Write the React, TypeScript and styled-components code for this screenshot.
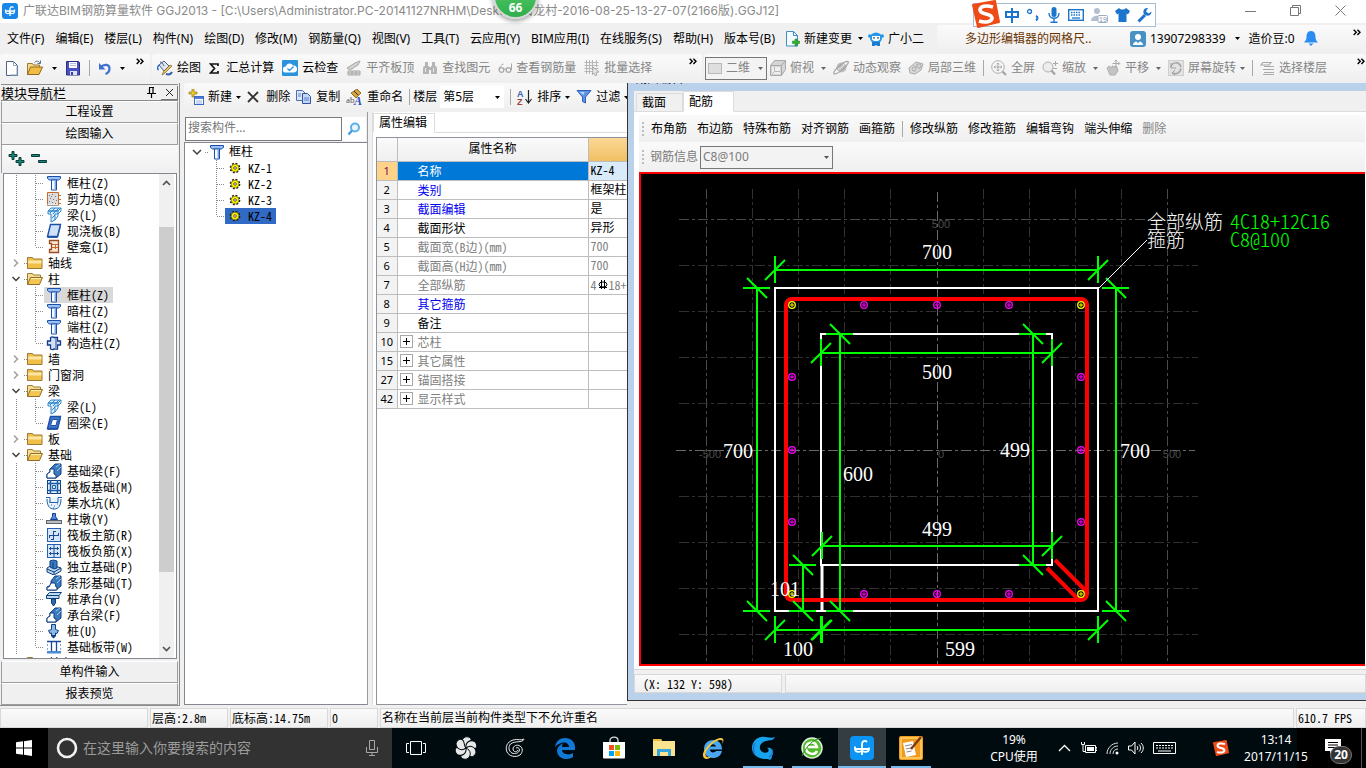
import React from "react";
import styled, { createGlobalStyle, css } from "styled-components";

const UI = `"Noto Sans", "Noto Sans CJK SC", sans-serif`;
const SONG = `"Noto Sans CJK SC", sans-serif`;
const shade = "linear-gradient(#fafafa, #efefef)";

const Global = createGlobalStyle`
  * { box-sizing: border-box; }
  html, body { margin: 0; padding: 0; height: 100%; }
  body { font: 12px/16px ${UI}; color: #000; background: #f0f0f0; overflow: hidden; }
  button, input, select { font: inherit; color: inherit; margin: 0; padding: 0; border: 0; background: none; border-radius: 0; }
  button { white-space: nowrap; text-align: left; }
  ul { list-style: none; margin: 0; padding: 0; }
  svg { display: block; flex: none; }
`;

const Page = styled.div`
  height: 100vh;
  display: flex;
  flex-direction: column;
  position: relative;
  overflow: hidden;
`;

/* ---------- CJK text with half-width latin forms ---------- */
const Song = styled.span`
  font-family: ${SONG};
  font-feature-settings: "hwid";
  white-space: pre;
`;

/* ---------- icons ---------- */
type IcoProps = { w?: number; h?: number; box?: string; children: React.ReactNode };
const Ico = ({ w = 16, h = 16, box, children }: IcoProps) => (
  <svg width={w} height={h} viewBox={box || `0 0 ${w} ${h}`} fill="none" aria-hidden="true">
    {children}
  </svg>
);

const Caret = ({ color = "#000" }: { color?: string }) => (
  <Ico w={5} h={3}>
    <path d="M0 0h5L2.5 3z" fill={color} />
  </Ico>
);
const More = () => (
  <Ico w={8} h={7}>
    <path d="M.7 .7l2.6 2.6L.7 6M4.4 .7L7 3.300 4.400 6" stroke="#000" strokeWidth="1.400" />
  </Ico>
);

const Logo = () => (
  <Ico>
    <rect width="16" height="16" rx="3" fill="#1788e8" />
    <path d="M8 13V5.500a2 2 0 0 1 3.500-1M3.500 8h9M3.500 6.500v2A2.300 2.300 0 0 0 8 9a2.300 2.300 0 0 0 4.500-.5v-2" stroke="#fff" strokeWidth="1.300" />
  </Ico>
);
const NewDoc = () => (
  <Ico w={12} h={15}>
    <path d="M.5.5h7l4 4v10H.5z" fill="#fff" stroke="#4d6185" />
    <path d="M7.500.5v4h4M11 6v8H4" stroke="#8fa5c6" />
  </Ico>
);
const OpenDir = () => (
  <Ico>
    <path d="M.5 14.500v-11h5l1 1.500h6v2.500" fill="#f5d98b" stroke="#9a7a35" />
    <path d="M.5 14.500l3-7.500h12l-3.500 7.500z" fill="#f3bd45" stroke="#8f6b1e" />
    <path d="M7.500 2.500c2-2 4.500-1.500 5.500.500M13.500.5V3.500h-3" stroke="#59708f" />
  </Ico>
);
const Save = () => (
  <Ico w={14} h={15}>
    <path d="M.5.5h12l1 1v12.500H.5z" fill="#4a50c0" stroke="#2a2e85" />
    <path d="M3 1h8v6H3z" fill="#fff" />
    <path d="M4 2.500h6M4 4.500h6" stroke="#b9bede" />
    <path d="M4 10h7v4H4z" fill="#dde0f2" />
    <path d="M5 11h2v3H5z" fill="#3a41a5" />
  </Ico>
);
const Undo = () => (
  <Ico w={12} h={13}>
    <path d="M1.500 5.500C5 1.500 10.500 2 10.500 6.500c0 2.500-1.500 4.500-4 5.500" stroke="#3f6fd0" strokeWidth="2.200" />
    <path d="M0 1v6.500h6.500z" fill="#3f6fd0" />
  </Ico>
);
const Paint = () => (
  <Ico>
    <path d="M2 5l5-4 5 5-5 5z" fill="#dce6f2" stroke="#476080" />
    <path d="M3 2c2 0 3 2 4 4" stroke="#476080" />
    <path d="M2 5c-2 2-1.500 4-.5 5" stroke="#2d69c9" strokeWidth="1.500" />
    <path d="M15 6l-7 7-3 2 1.500-3.500L13 5z" fill="#e7bf5e" stroke="#7d6426" strokeWidth=".7" />
    <path d="M9 14c3 1 5 0 6-2" stroke="#315ca8" strokeWidth="2" />
  </Ico>
);
const Sigma = () => (
  <Ico w={10} h={11}>
    <path d="M9 3V1H1.500l4 4.500-4 4.500H9V8" stroke="#111" strokeWidth="1.700" />
  </Ico>
);
const CloudCheck = () => (
  <Ico>
    <rect width="16" height="16" rx="1" fill="#2a93dd" />
    <path d="M4 12.500a3 3 0 0 1-.3-6A4 4 0 0 1 11 5.500a3.500 3.500 0 0 1 1 7z" fill="#fff" />
    <path d="M5.500 8.500l2 2 4-4" stroke="#2a93dd" strokeWidth="1.300" />
  </Ico>
);
const grey = "#a9a9a9";
const Align = () => (
  <Ico>
    <path d="M1 8l8-5 5-2-2 4-8 5z" fill="#d2d2d2" stroke={grey} />
    <path d="M2 11h12v4H2zM2 13h12M6 11v4M10 11v4" stroke={grey} fill="#dcdcdc" />
  </Ico>
);
const Binoc = () => (
  <Ico>
    <path d="M3 2h3v4H3zM10 2h3v4h-3zM2 6h5v8H1V8zM9 6h5l1 2v6H9zM7 7h2v3H7z" fill="#b5b5b5" />
    <path d="M3.500 8v4M11.500 8v4" stroke="#e6e6e6" />
  </Ico>
);
const Glasses = () => (
  <Ico w={14} h={14}>
    <path d="M5.500 3C3 4 1 6 1 9M13.500 2.500V9" stroke={grey} />
    <circle cx="3.500" cy="9" r="2.300" stroke={grey} strokeWidth="1.300" />
    <circle cx="10.500" cy="9" r="2.300" stroke={grey} strokeWidth="1.300" />
    <path d="M6 8h2" stroke={grey} />
  </Ico>
);
const Batch = () => (
  <Ico>
    <path d="M.5 2.500h14M.5 5.500h14M.5 8.500h14M.5 11.500h8M2.500 0v14M5.500 0v14M8.500 0v10M12.500 0v7" stroke="#b7b7b7" />
    <path d="M9 7l6 5-3 .3 1 2.700-2 .5-1-2.500-1.500 1.500z" fill="#e8e8e8" stroke="#999" strokeWidth=".8" />
  </Ico>
);
const Flat = () => (
  <Ico w={14} h={11}>
    <rect x=".5" y=".5" width="13" height="10" fill="#dedede" stroke="#b9b9b9" />
  </Ico>
);
const Cube = () => (
  <Ico>
    <path d="M.5 5.500l4-5h11v9l-4 6H.5z" fill="#d5d5d5" stroke={grey} />
    <path d="M.5 5.500h11v10M11.500 5.500l4-5" stroke={grey} />
    <path d="M2 7h8v7H2z" fill="#efefef" />
    <path d="M4.500 7v4.500H10M4.500 11.500L2 14" stroke="#bbb" />
  </Ico>
);
const Orbit = () => (
  <Ico>
    <circle cx="8.500" cy="7.500" r="5" fill="#bdbdbd" />
    <path d="M1 14C-1 11 11 1 15 1.500c2 2-9 13-14 12.500z" stroke="#a5a5a5" strokeWidth="1.200" />
    <path d="M5 9c2 0 5-2 6-5" stroke="#ededed" />
  </Ico>
);
const Part3d = () => (
  <Ico>
    <path d="M1 8l7-6 7 2-2 6-6 4-5-1z" fill="#dadada" stroke={grey} />
    <circle cx="6" cy="9" r="2" stroke={grey} />
    <circle cx="11" cy="6" r="2" stroke={grey} />
    <path d="M5 5l7 4M9 3l-2 9" stroke="#bcbcbc" />
  </Ico>
);
const Full = () => (
  <Ico>
    <circle cx="7" cy="7" r="6.300" stroke="#b0b0b0" />
    <path d="M7 3v8M3 7h8M5.700 4.300L7 3l1.300 1.300M5.700 9.700L7 11l1.300-1.300M4.300 5.700L3 7l1.300 1.300M9.700 5.700L11 7 9.700 8.300" stroke={grey} />
    <path d="M11.500 11.500L15 15" stroke="#a0a0a0" strokeWidth="2" />
  </Ico>
);
const ZoomI = () => (
  <Ico>
    <circle cx="6" cy="7" r="5" stroke="#b0b0b0" fill="#ededed" />
    <path d="M9.500 10.500L13 14.500" stroke="#a0a0a0" strokeWidth="2" />
    <path d="M11 3.500h5M13.500 1v5M11 8.500h4" stroke={grey} />
  </Ico>
);
const Pan = () => (
  <Ico>
    <path d="M2 8l2-2 3 2V6l5 1 1 4-3 4H5z" fill="#c4c4c4" stroke="#b0b0b0" />
    <path d="M11 0v8M7.500 3.500h7M9.500 1.500L11 0l1.500 1.500M13.300 2l1.500 1.500L13.300 5" stroke={grey} />
  </Ico>
);
const Rotate = () => (
  <Ico>
    <rect x=".5" y=".5" width="15" height="15" fill="#e2e2e2" stroke="#cfcfcf" />
    <path d="M3 7c1-5 8-6 10 0M13 8.500c-1 5-5 6-8 4.500" stroke="#a2a2a2" strokeWidth="1.500" />
    <path d="M3 3v5h5M7 10l-3 3 3 2" stroke="#a2a2a2" />
  </Ico>
);
const Floors = () => (
  <Ico w={15}>
    <path d="M3 2.500h8L9 5H1zM4 6.500h10M3 9.500h11M4 12.500h10M3 14.500h11" stroke={grey} strokeWidth="1.200" />
  </Ico>
);
const NewItem = () => (
  <Ico>
    <path d="M4 0h2v3h3v2H6v3H4V5H1V3h3z" fill="#f1cf2e" stroke="#8c7410" strokeWidth=".7" />
    <rect x="6.500" y="7.500" width="9" height="8" fill="#fff" stroke="#3f66c0" />
    <path d="M7 8h8v2H7z" fill="#4f7fdd" />
    <path d="M8 12h6M8 14h6" stroke="#8fb0ea" />
  </Ico>
);
const Cross = () => (
  <Ico w={12} h={12}>
    <path d="M1 1l10 10M11 1L1 11" stroke="#333" strokeWidth="1.800" />
  </Ico>
);
const Copy = () => (
  <Ico>
    <path d="M.5 1.500h6l3 3v7h-9z" fill="#dbe7fb" stroke="#4a6fb5" />
    <path d="M6.500 4.500h5l3 3v7h-8z" fill="#c2d6f8" stroke="#31549c" />
    <path d="M2 5h3M2 7h3M8 9h5M8 11h5" stroke="#5c82c8" />
  </Ico>
);
const Rename = () => (
  <Ico w={17}>
    <path d="M5 4l6-4 4 4-5 5z" fill="#d8a33a" stroke="#7a5a1c" strokeWidth=".8" />
    <path d="M8 2l4 4" stroke="#333" />
    <text x="0" y="14" fontSize="9" fontFamily="Liberation Serif" fill="#555">ab</text>
    <text x="8" y="16" fontSize="12" fontWeight="700" fontStyle="italic" fontFamily="Liberation Serif" fill="#2a50b8">A</text>
  </Ico>
);
const SortAZ = () => (
  <Ico>
    <text x="0" y="8" fontSize="9" fontWeight="700" fontFamily="Liberation Sans" fill="#3a5fae">A</text>
    <text x="0" y="16" fontSize="9" fontWeight="700" fontFamily="Liberation Sans" fill="#a0403c">Z</text>
    <path d="M11.500 1v12M8.500 10l3 4 3-4" stroke="#222" strokeWidth="1.200" />
  </Ico>
);
const Funnel = () => (
  <Ico>
    <path d="M1 1.500h14L9.500 8v6l-3-1.500V8z" fill="#5c93e6" stroke="#2c5fb8" />
    <path d="M3.500 3h5l-1 3z" fill="#b7d2fa" />
  </Ico>
);
const NewChange = () => (
  <Ico w={14} h={16}>
    <path d="M.5.5h7l4 4v10.500H.5z" fill="#f4fbff" stroke="#3f8ec6" />
    <path d="M7.500.5v4h4" stroke="#3f8ec6" />
    <path d="M9 8h2v2h2.500v2.500H11V15H9v-2.500H6.500V10H9z" fill="#32b232" stroke="#1c7c1c" strokeWidth=".5" />
  </Ico>
);
const Mascot = () => (
  <Ico>
    <ellipse cx="8" cy="7" rx="6" ry="5.500" fill="#2596e8" />
    <circle cx="1.800" cy="5" r="1.800" fill="#2596e8" />
    <circle cx="14.200" cy="5" r="1.800" fill="#2596e8" />
    <path d="M4 11h8v4H9.500l-1.500-1-1.500 1H4z" fill="#1b7ccd" />
    <path d="M4 5h8v3.500c-2 2-6 2-8 0z" fill="#fff" />
    <circle cx="6" cy="6.800" r=".9" fill="#1b4d80" />
    <circle cx="10" cy="6.800" r=".9" fill="#1b4d80" />
  </Ico>
);
const Avatar = () => (
  <Ico>
    <rect width="16" height="16" rx="3" fill="#4791c4" />
    <circle cx="8" cy="6" r="3" fill="#fff" />
    <path d="M3 14c0-5 10-5 10 0z" fill="#fff" />
    <path d="M6 9.500l2 3 2-3z" fill="#4791c4" />
  </Ico>
);
const Bell = () => (
  <Ico w={14} h={15}>
    <path d="M7 0c3.500 0 4.500 3 4.500 6 0 2.500 1 4 2.500 5.500H0C1.500 10 2.500 8.500 2.500 6c0-3 1-6 4.500-6z" fill="#2a8cf0" />
    <path d="M4.500 12.500h5L7 15z" fill="#2a8cf0" />
  </Ico>
);
const Lens = () => (
  <Ico w={14} h={14}>
    <circle cx="8" cy="5.500" r="4" stroke="#5bb1ea" strokeWidth="2" fill="#eaf6fe" />
    <path d="M5 8.500L1.500 12.500" stroke="#4a98dc" strokeWidth="2.400" />
  </Ico>
);
const Pin = () => (
  <Ico w={9} h={11}>
    <path d="M2.500 1v5M6 .5v5.500M2 .5h5M0 6.500h9M4.500 6v5" stroke="#000" strokeWidth="1.200" />
  </Ico>
);
const CloseX = () => (
  <Ico w={9} h={9}>
    <path d="M1 1l7 7M8 1L1 8" stroke="#222" />
  </Ico>
);
const Expand2 = () => (
  <Ico w={17} h={16}>
    <path d="M4 .500h2v3h3v2H6v3H4v-3H1v-2h3z" fill="#1d8a7e" stroke="#063c37" />
    <path d="M11 6.500h2v3h3v2h-3v3h-2v-3H8v-2h3z" fill="#1d8a7e" stroke="#063c37" />
  </Ico>
);
const Collapse2 = () => (
  <Ico w={16} h={16}>
    <path d="M.5 3.500h8v2h-8zM7.500 9.500h8v2h-8z" fill="#1d8a7e" stroke="#063c37" />
  </Ico>
);

/* tree glyphs */
const b1 = "#1b4fa8";
const Column = () => (
  <Ico>
    <path d="M1.500 1.500h13v2l-2 1.500h-9l-2-1.500z" fill="#9cc0f5" stroke={b1} />
    <path d="M5.500 5h5v10h-5z" fill="#fff" stroke={b1} />
    <path d="M8.500 5.500h1.500v9H8.500z" fill="#7ba8ec" />
  </Ico>
);
const Wall = () => (
  <Ico>
    <rect x="1.500" y="1.500" width="11" height="12" fill="#dcdcdc" />
    <path d="M3 4.500h1M6 3.500h1M9 5.500h1M4 7.500h1M7 8.500h1M10 9.500h1M3 10.500h1M6 11.500h1M9 12.500h1M5 5.500h1" stroke="#777" />
    <path d="M1.500 13.500v-12h11v13M13 4.500h2M13 8.500h2M13 12.500h2" stroke="#c96a28" />
    <path d="M1 14.500h11" stroke="#999" />
  </Ico>
);
const Beam = () => (
  <Ico>
    <path d="M2 4l3-3h10l-3 3zM2 4v3h3v8l4-2V7h3V4z" fill="#d6eafb" stroke="#2f86cc" />
    <path d="M4 6l5-5M7 7l6-6M9 13l3-4V7l3-3V1M6 11l3-3" stroke="#2f86cc" />
  </Ico>
);
const Slab = ({ hole = false }: { hole?: boolean }) => (
  <Ico>
    <path d="M4.500 1.500h10l-3 12h-10z" fill={hole ? "#3f78cc" : "#cfe2fa"} stroke={b1} strokeWidth="1.400" />
    {hole && <path d="M6.500 4.500h5l-1.500 6H4.500z" fill="#fff" stroke={b1} />}
    <path d="M1.500 14.500h10l3-11" stroke="#2c5cab" />
  </Ico>
);
const Niche = () => (
  <Ico>
    <path d="M3.500 1.500h9v12h-9v-3h2v-6h-2z" fill="#fbe7d8" stroke="#9a4b1c" strokeWidth="1.300" />
    <path d="M6 5.500h6M6 8.500h6M9.500 5v5" stroke="#c46a30" />
  </Ico>
);
const Struct = () => (
  <Ico>
    <path d="M4.500 2.500c1.500-1 2.500-1 3.500 0h3.500V6h3v4h-3v4H8c-1 1-2 1-3.500 0V10h-3V6h3z" fill="#cfe0f8" stroke="#143a88" strokeWidth="1.300" />
    <path d="M10 3v11" stroke="#7d92c4" strokeWidth="2" />
  </Ico>
);
const Closed = () => (
  <Ico>
    <path d="M.5 13.500v-11h5l1 1.500h8.500v9.500z" fill="#f0bf48" stroke="#9a7b32" />
    <path d="M1 5.500h13.500v3H1z" fill="#fbe5a0" />
  </Ico>
);
const Opened = () => (
  <Ico>
    <path d="M.5 13.500v-11h5l1 1.500h7v2.500" fill="#f7dc92" stroke="#9a7b32" />
    <path d="M.5 13.500l3-7h12l-3 7z" fill="#f5c553" stroke="#8f6f24" />
    <path d="M4 7.500h10" stroke="#fdeebc" />
  </Ico>
);
const FBeam = ({ step = false }: { step?: boolean }) => (
  <Ico>
    <path d={step ? "M1 15v-3l4-2V6l4-5h6v10l-5 4z" : "M1 15v-4l3-2V6l5-5h6v10l-5 4z"} fill="#3b7cc0" stroke="#0f3f7c" />
    <path d={step ? "M1 15v-3h2l2-4h4l1 4h1v3z" : "M1 15v-4l3-2V6h4v5l2 1v3z"} fill="#fff" stroke="#0f3f7c" />
    <path d="M10 4l4-3M11 8l4-4" stroke="#9fc9ee" />
  </Ico>
);
const Raft = () => (
  <Ico>
    <rect x="1.500" y="1.500" width="13" height="13" stroke="#0f3f7c" fill="#e5f0fb" />
    <path d="M4.500 1v14M11.500 1v14M1 4.500h14M1 11.500h14" stroke="#1b5aa6" strokeWidth="1.500" />
    <path d="M6.500 6.500h3v3h-3z" stroke="#1b5aa6" />
  </Ico>
);
const Sump = () => (
  <Ico>
    <path d="M0 2.500h4v5h8v-5h4M1 4c0 6 2 10 7 10s7-4 7-10" stroke="#1f5fae" fill="#e9f3fd" />
    <path d="M5 10h1M8 11h1M11 9h1M7 13h1M3 7h1" stroke="#1f5fae" />
  </Ico>
);
const Pier = () => (
  <Ico>
    <path d="M6.500 2.500h3v3l2 3h-7l2-3z" fill="#4f8ae0" stroke="#143f96" />
    <rect x=".5" y="9.500" width="15" height="3" fill="#b9bdc4" stroke="#5d646e" />
  </Ico>
);
const RebarBox = ({ neg = false }: { neg?: boolean }) => (
  <Ico>
    <rect x="1.500" y="1.500" width="13" height="13" fill="#d6e6fb" stroke="#2460b8" />
    {neg ? (
      <path d="M8 2v12M3 5.500h10M3 10.500h10M4.500 4v3M11.500 9v3M4.500 9v3M11.500 4v3" stroke="#1a4a94" />
    ) : (
      <path d="M7.500 4v9M3 8.500h10M7 4.500h3M3.500 9v2M12.500 8V6M8 12.500h-3" stroke="#1a4a94" />
    )}
  </Ico>
);
const Footing = () => (
  <Ico>
    <path d="M1 9l5-3 9 3v3l-7 4-7-3z" fill="#bcd9f3" stroke="#0f3f7c" />
    <path d="M4 2l3-1 4 1v7l-3 1-4-2z" fill="#3b7cc0" stroke="#0f3f7c" />
    <path d="M1 10l7 3 7-4M8 13v3M7 3v6" stroke="#0f3f7c" />
  </Ico>
);
const Cap = () => (
  <Ico>
    <path d="M.5 4.500l3-3h12l-2.500 3v3H.5z" fill="#bcd9f3" stroke="#0f3f7c" />
    <path d="M.5 4.500H13" stroke="#0f3f7c" />
    <path d="M5.500 8h4v4l-2 3-2-3z" fill="#2c6ab4" stroke="#0f3f7c" />
  </Ico>
);
const Pile = () => (
  <Ico>
    <path d="M5.500 1.500h4v5l3 1-1.500 3-1.500-.5v3L7.500 15l-2-2v-3L4 10.500 2.500 7.500l3-1z" fill="#8db9e8" stroke="#123f83" />
    <path d="M5 12h5l-2.500 3.500z" fill="#123f83" />
  </Ico>
);
const Strip = () => (
  <Ico>
    <rect x="1" y="12" width="14" height="2.500" fill="#4c8ad6" />
    <path d="M1 2.500h14M5.500 3v9M10.500 3v9" stroke="#1a4a94" strokeWidth="1.300" />
    <path d="M1.500 5v6M14.500 5v6" stroke="#87a9d6" strokeDasharray="2 2" />
  </Ico>
);
const Gear = () => (
  <Ico w={12} h={12}>
    <circle cx="6" cy="6" r="4.600" stroke="#222000" strokeWidth="1.500" strokeDasharray="2 1.600" />
    <circle cx="6" cy="6" r="3.800" fill="#fff200" stroke="#5a5600" strokeWidth=".6" />
    <circle cx="6" cy="6" r="1.300" fill="#fff" stroke="#333" strokeWidth=".8" />
  </Ico>
);

/* ---------- title bar ---------- */
const TitleBar = styled.header`
  height: 23px;
  flex: none;
  background: #fff;
  display: flex;
  align-items: center;
  padding: 0 20px 2px 2px;
  gap: 5px;
  color: #8a8a8a;
`;
const TitleText = styled.h1`
  font: 400 12px/16px Inter, "Noto Sans CJK SC", sans-serif;
  margin: 0;
  flex: 1;
  white-space: pre;
`;
const WinButtons = styled.div`
  display: flex;
  gap: 34px;
`;

const Ball = styled.button`
  position: absolute;
  left: 493px;
  top: -26px;
  width: 45px;
  height: 45px;
  border-radius: 50%;
  background: linear-gradient(#5fd070, #2fae4c);
  border: 2px solid #d5d9d5;
  box-shadow: 0 2px 5px rgba(0, 0, 0, 0.4);
  color: #fff;
  font: 700 12px/14px ${UI};
  text-align: center;
  padding-top: 22px;
`;

const Ime = styled.div`
  position: absolute;
  right: 210px;
  top: 3px;
  height: 24px;
  width: 183px;
  background: #fff;
  border: 1px solid #a9bdd2;
  display: flex;
  align-items: center;
  justify-content: flex-end;
  gap: 7px;
  padding-right: 3px;
`;
const ImeBadge = styled.div`
  position: absolute;
  left: -2px;
  top: -4px;
`;

/* ---------- menus and toolbars ---------- */
const MenuRow = styled.nav`
  height: 31px;
  flex: none;
  display: flex;
  align-items: center;
  background: #f0f0f0;
`;
const Menus = styled.div`
  display: flex;
  flex: none;
  width: 937px;
  padding-left: 2px;
  align-items: center;
`;
const MenuItem = styled.button`
  padding: 0 6px 0 5px;
`;
const Bar = styled.div<{ $w?: number; $gap?: number; $pad?: number; $h?: number }>`
  display: flex;
  align-items: center;
  height: ${(p) => p.$h || 28}px;
  gap: ${(p) => p.$gap || 8}px;
  padding: 0 ${(p) => p.$pad || 6}px;
  background: ${shade};
  border-radius: 3px;
  ${(p) => (p.$w ? css`width: ${p.$w}px; flex: none;` : css`flex: 1; min-width: 0;`)}
`;
const Notice = styled.a`
  color: #6b3300;
  text-decoration: none;
  padding-left: 22px;
`;
const Push = styled.span`
  margin: 4px 0 0 auto;
  align-self: flex-start;
`;
const Tool = styled.button<{ $off?: boolean }>`
  display: flex;
  align-items: center;
  flex: none;
  gap: 4px;
  color: ${(p) => (p.$off ? "#858585" : "#000")};
`;
const Cluster = styled.div<{ $gap: number }>`
  display: flex;
  align-items: center;
  flex: none;
  gap: ${(p) => p.$gap}px;
  white-space: nowrap;
`;
const Sep = styled.span<{ $tight?: boolean }>`
  width: 1px;
  height: 16px;
  flex: none;
  margin: 0 ${(p) => (p.$tight ? -3 : 0)}px;
  background: #a8a8a8;
`;
const ToolRow = styled.div`
  height: 29px;
  flex: none;
  display: flex;
  gap: 2px;
  background: #f0f0f0;
`;
const Pick = styled.label<{ $w: number; $h: number; $edge?: string; $color?: string }>`
  position: relative;
  display: flex;
  align-items: center;
  flex: none;
  gap: 4px;
  width: ${(p) => p.$w}px;
  height: ${(p) => p.$h}px;
  padding-left: 2px;
  border: 1px solid ${(p) => p.$edge || "transparent"};
  background: ${(p) => (p.$edge ? "#f3f3f3" : "#fff")};
  color: ${(p) => p.$color || "#000"};
  select {
    appearance: none;
    flex: 1;
    min-width: 0;
    height: 100%;
    outline: 0;
  }
`;
const PickArrow = styled.span`
  position: absolute;
  right: 0;
  top: 0;
  bottom: 0;
  width: 11px;
  display: flex;
  align-items: center;
  justify-content: center;
  pointer-events: none;
`;

/* ---------- workspace ---------- */
const Main = styled.main`
  flex: 1;
  min-height: 0;
  display: flex;
`;

const Nav = styled.aside`
  width: 180px;
  flex: none;
  display: flex;
  flex-direction: column;
  padding: 1px 1px 0 1px;
  margin-right: 4px;
  margin-bottom: 1px;
  border-right: 1px solid #8c8c8c;
  border-bottom: 1px solid #8c8c8c;
`;
const NavHead = styled.div`
  height: 17px;
  flex: none;
  display: flex;
  align-items: center;
  border: 1px solid #8a8a8a;
  border-width: 1px 0;
  font-size: 13px;
  h2 { font: inherit; margin: 0; flex: 1; line-height: 14px; }
`;
const NavClose = styled.button`
  width: 17px;
  height: 14px;
  margin-left: 5px;
  display: flex;
  align-items: center;
  justify-content: center;
  border: 1px solid #777;
  border-width: 0 1px 1px 0;
`;
const NavButton = styled.button`
  height: 22px;
  flex: none;
  text-align: center;
  border: 1px solid #9d9d9d;
  border-top-color: #fff;
  background: #f0f0f0;
`;
const TreeTools = styled.div`
  height: 28px;
  flex: none;
  display: flex;
  align-items: center;
  gap: 6px;
  padding-left: 6px;
  background: ${shade};
  border-left: 1px solid #9d9d9d;
`;
const TreeBox = styled.div`
  flex: 1;
  min-height: 0;
  margin: 0 1px 2px 2px;
  display: flex;
  background: #fff;
  border: 1px solid #828790;
  overflow: hidden;
`;
const Tree = styled.ul`
  flex: 1;
  min-width: 0;
  padding-top: 1px;
  overflow: hidden;
`;
const Row = styled.li`
  display: flex;
  height: 16px;
`;
const Leaf = styled.button<{ $bg?: string; $pad?: number; $gap?: number }>`
  display: flex;
  align-items: center;
  height: 16px;
  gap: ${(p) => p.$gap || 5}px;
  padding: 0 4px 0 ${(p) => p.$pad || 0}px;
  background: ${(p) => p.$bg || "none"};
`;
const Scroll = styled.div`
  width: 15px;
  margin-right: 2px;
  background: #f0f0f0;
  display: flex;
  flex-direction: column;
  align-items: center;
  padding: 6px 0;
`;
const Thumb = styled.div`
  width: 15px;
  margin: 41px 0 auto;
  height: 73%;
  background: #cdcdcd;
`;

const dots = { stroke: "#8a8a8a", strokeDasharray: "1 1" };
const LeafLines = ({ last }: { last?: boolean }) => (
  <Ico w={40}>
    <path d={`M12.500 0v16M31.500 0v${last ? 8 : 16}M32 8.500h8`} {...dots} />
  </Ico>
);
const FolderLines = ({ open }: { open?: boolean }) => (
  <Ico w={23}>
    {open ? (
      <path d="M8.500 6l3.500 3.500L15.500 6" stroke="#404040" strokeWidth="1.500" />
    ) : (
      <path d="M10 4.500L13.500 8 10 11.500" stroke="#a0a0a0" strokeWidth="1.500" />
    )}
    <path d="M20 8.500h3" {...dots} />
  </Ico>
);

type Node = { t: string; i?: React.ReactNode; open?: boolean; last?: boolean; on?: boolean };
const NODES: Node[] = [
  { t: "框柱(Z)", i: <Column /> },
  { t: "剪力墙(Q)", i: <Wall /> },
  { t: "梁(L)", i: <Beam /> },
  { t: "现浇板(B)", i: <Slab /> },
  { t: "壁龛(I)", i: <Niche />, last: true },
  { t: "轴线" },
  { t: "柱", open: true },
  { t: "框柱(Z)", i: <Column />, on: true },
  { t: "暗柱(Z)", i: <Column /> },
  { t: "端柱(Z)", i: <Column /> },
  { t: "构造柱(Z)", i: <Struct />, last: true },
  { t: "墙" },
  { t: "门窗洞" },
  { t: "梁", open: true },
  { t: "梁(L)", i: <Beam /> },
  { t: "圈梁(E)", i: <Slab hole />, last: true },
  { t: "板" },
  { t: "基础", open: true },
  { t: "基础梁(F)", i: <FBeam /> },
  { t: "筏板基础(M)", i: <Raft /> },
  { t: "集水坑(K)", i: <Sump /> },
  { t: "柱墩(Y)", i: <Pier /> },
  { t: "筏板主筋(R)", i: <RebarBox /> },
  { t: "筏板负筋(X)", i: <RebarBox neg /> },
  { t: "独立基础(P)", i: <Footing /> },
  { t: "条形基础(T)", i: <FBeam step /> },
  { t: "桩承台(V)", i: <Cap /> },
  { t: "承台梁(F)", i: <FBeam /> },
  { t: "桩(U)", i: <Pile /> },
  { t: "基础板带(W)", i: <Strip />, last: true },
  { t: "其它" },
];

const Middle = styled.section`
  width: 443px;
  flex: none;
  display: flex;
  flex-direction: column;
  overflow: hidden;
`;
const Columns = styled.div`
  flex: 1;
  min-height: 0;
  display: flex;
  gap: 4px;
  padding-bottom: 2px;
`;
const Parts = styled.div`
  width: 184px;
  flex: none;
  display: flex;
  flex-direction: column;
  padding-top: 5px;
  border-right: 1px solid #9a9a9a;
`;
const SearchRow = styled.form`
  display: flex;
  height: 24px;
  margin: 0 1px 1px;
  background: #fff;
  input {
    width: 157px;
    border: 1px solid #7a7a7a;
    background: #fff;
    padding: 0 2px 3px;
    outline: 0;
  }
  input::placeholder { color: #777; opacity: 1; }
  button { flex: 1; display: flex; align-items: center; justify-content: center; }
`;
const PartTree = styled.ul`
  flex: 1;
  background: #fff;
  border: 1px solid #828790;
  border-right: 0;
  padding: 1px 0 0 5px;
`;
const Props = styled.div`
  flex: 1;
  min-width: 0;
  display: flex;
  flex-direction: column;
  background: #fff;
  border-left: 1px solid #dcdcdc;
`;
const TabStrip = styled.div<{ $h: number; $pad?: number; $bg?: string }>`
  height: ${(p) => p.$h}px;
  flex: none;
  display: flex;
  align-items: flex-end;
  padding-left: ${(p) => p.$pad || 0}px;
  background: ${(p) => p.$bg || "#fff"};
  box-shadow: inset 0 -1px #dcdcdc;
`;
const Tab = styled.button<{ $on?: boolean; $w: number; $h: number }>`
  width: ${(p) => p.$w}px;
  height: ${(p) => p.$h}px;
  padding-left: 5px;
  border: 1px solid #dcdcdc;
  border-bottom-color: ${(p) => (p.$on ? "#fff" : "#dcdcdc")};
  background: ${(p) => (p.$on ? "#fff" : "#f0f0f0")};
`;
const GridBox = styled.div`
  flex: 1;
  margin: 4px 0 0 3px;
  border: 1px solid #8f949c;
  border-right: 0;
  overflow: hidden;
`;
const Grid = styled.table`
  width: 280px;
  border-collapse: collapse;
  table-layout: fixed;
  th, td {
    height: 19px;
    padding: 0;
    font-weight: 400;
    border: 1px solid #bdbdbd;
    border-left: 0;
    white-space: nowrap;
    overflow: hidden;
  }
  tr > :last-child { border-right: 0; }
  thead th { height: 23px; background: ${shade}; border-top: 0; }
  thead th:last-child { background: linear-gradient(#fbd796, #efbf62); }
`;
const Num = styled.th<{ $on?: boolean }>`
  background: ${(p) => (p.$on ? "#ffd28a" : "#f3f3f3")};
  color: ${(p) => (p.$on ? "#7a1048" : "#000")};
  font-size: 11px;
`;
const Name = styled.div<{ $plus?: boolean }>`
  display: flex;
  align-items: center;
  gap: 5px;
  height: 18px;
  padding-left: ${(p) => (p.$plus ? 2 : 20)}px;
`;
const NameCell = styled.td<{ $c: string; $on?: boolean }>`
  color: ${(p) => p.$c};
  background: ${(p) => (p.$on ? "#0078d7" : "#fff")};
`;
const ValueCell = styled.td<{ $on?: boolean; $c: string }>`
  background: ${(p) => (p.$on ? "#d9ebf9" : "#fff")};
  color: ${(p) => (p.$on ? "#000" : p.$c)};
  > * { padding-left: 2px; }
`;
const PlusBox = styled.button`
  width: 13px;
  height: 13px;
  border: 1px solid #a8a8a8;
  display: flex;
  align-items: center;
  justify-content: center;
`;
const BLUE = "#0000f0";
const DIM = "#808080";
const ROWS: [number, string, string, string][] = [
  [1, "名称", "KZ-4", "#fff"],
  [2, "类别", "框架柱", BLUE],
  [3, "截面编辑", "是", BLUE],
  [4, "截面形状", "异形", "#000"],
  [5, "截面宽(B边)(mm)", "700", DIM],
  [6, "截面高(H边)(mm)", "700", DIM],
  [7, "全部纵筋", "", DIM],
  [8, "其它箍筋", "", BLUE],
  [9, "备注", "", "#000"],
  [10, "芯柱", "", DIM],
  [15, "其它属性", "", DIM],
  [27, "锚固搭接", "", DIM],
  [42, "显示样式", "", DIM],
];
const Phi = () => (
  <Ico w={12} h={12}>
    <ellipse cx="6" cy="5.500" rx="4" ry="2.500" stroke="#000" />
    <path d="M4.500 1v9M7.500 1v9M2 8.500h8" stroke="#000" />
  </Ico>
);
const Inline = styled.span`
  display: flex;
  align-items: center;
`;

/* ---------- section editor ---------- */
const Editor = styled.section`
  flex: 1;
  min-width: 0;
  display: flex;
  flex-direction: column;
  margin-bottom: 6px;
  background: #b9d1ea;
  border-left: 1px solid #333;
  border-bottom: 1px solid #333;
  padding: 0 0 7px 6px;
`;
const EditorTitle = styled.div`
  height: 8px;
  flex: none;
  overflow: hidden;
  display: flex;
  align-items: flex-end;
  padding-bottom: 4px;
  padding-left: 1px;
`;
const Pane = styled.div`
  flex: 1;
  min-height: 0;
  display: flex;
  flex-direction: column;
  background: #fff;
  padding: 3px 1px 3px 5px;
`;
const EditRow = styled.div<{ $h: number }>`
  height: ${(p) => p.$h}px;
  flex: none;
  display: flex;
  align-items: center;
  gap: 10px;
  padding-left: 3px;
  background: ${shade};
`;
const Grip = styled.span`
  width: 2px;
  height: 14px;
  margin-right: -3px;
  background: repeating-linear-gradient(#bdbdbd 0 2px, transparent 2px 4px);
`;
const Field = styled.div`
  display: flex;
  align-items: center;
  gap: 2px;
  margin-left: -1px;
  color: #7b7b7b;
`;
const Canvas = styled.div`
  flex: 1;
  min-height: 0;
  overflow: hidden;
  background: #000;
  border: 2px solid #f00;
  border-right: 0;
`;
const EditorStatus = styled.div`
  height: 24px;
  flex: none;
  display: flex;
  gap: 3px;
  padding-top: 4px;
  background: #f0f0f0;
  border-top: 1px solid #d8d8d8;
`;
const Cell = styled.div<{ $w?: number; $pad?: number }>`
  ${(p) => (p.$w ? css`width: ${p.$w}px; flex: none;` : css`flex: 1;`)}
  display: flex;
  align-items: center;
  padding-left: ${(p) => p.$pad || 1}px;
  border: 1px solid #d8d8d8;
  background: ${shade};
  overflow: hidden;
  white-space: nowrap;
`;

const G = "#00ff00";
const TickV = ({ x, y }: { x: number; y: number }) => (
  <path d={`M${x} ${y - 14}v27M${x - 10} ${y + 10}l20-20`} />
);
const TickH = ({ x, y }: { x: number; y: number }) => (
  <path d={`M${x - 14} ${y}h27M${x - 10} ${y - 10}l20 20`} />
);
const DimH = ({ a, b, y }: { a: number; b: number; y: number }) => (
  <g>
    <path d={`M${a} ${y}H${b}`} />
    <TickV x={a} y={y} />
    <TickV x={b} y={y} />
  </g>
);
const DimV = ({ x, a, b }: { x: number; a: number; b: number }) => (
  <g>
    <path d={`M${x} ${a}V${b}`} />
    <TickH x={x} y={a} />
    <TickH x={x} y={b} />
  </g>
);
const Rebar = ({ x, y, c = "#f0f" }: { x: number; y: number; c?: string }) => (
  <g stroke={c}>
    <circle cx={x} cy={y} r="3.300" strokeWidth="1.300" />
    <path d={`M${x - 2} ${y}h4M${x} ${y - 2}v4`} />
  </g>
);
const gx = [706, 752, 798, 844, 890, 983, 1029, 1075, 1121, 1167];
const gy = [219, 265, 311, 357, 403, 496, 542, 588, 634];
const DIMS: [string, number, number][] = [
  ["700", 937, 252],
  ["500", 937, 372],
  ["700", 738, 451],
  ["499", 1015, 450],
  ["700", 1135, 451],
  ["600", 858, 474],
  ["499", 937, 529],
  ["101", 785, 589],
  ["100", 798, 649],
  ["599", 960, 649],
];
const AXIS: [string, number, number][] = [
  ["500", 941, 228],
  ["-500", 710, 458],
  ["0", 941, 458],
  ["500", 1172, 458],
];
const Section = () => (
  <svg width="724" height="490" viewBox="641 174 724 490" fill="none">
    <g strokeDasharray="10 3 3 3">
      {gx.map((x) => (
        <path key={x} d={`M${x}.500 189V664`} stroke={x === 706 || x === 1167 ? "#4a4a4a" : "#303030"} />
      ))}
      {gy.map((y) => (
        <path key={y} d={`M679 ${y}.500H1198`} stroke={y === 219 ? "#4a4a4a" : "#303030"} />
      ))}
      <path d="M937.500 192V664M676 450.500H1195" stroke="#6a6a6a" />
    </g>
    <g fill="#4c4c4c" fontFamily="Liberation Sans" fontSize="11" textAnchor="middle">
      {AXIS.map(([t, x, y]) => (
        <text key={t + x} x={x} y={y}>{t}</text>
      ))}
    </g>
    <g stroke="#fff" strokeWidth="2">
      <path d="M775 288H1098V611H775zM821 334H1052V565H821z" />
      <path d="M822 565V611" strokeWidth="3" />
    </g>
    <g stroke="#f00" strokeWidth="4">
      <rect x="786" y="299" width="301" height="301" rx="6" />
      <path d="M1047 568l32 32M1055 560l31 31" />
    </g>
    {[305, 594].map((y) => [864, 937, 1009].map((x) => <Rebar key={`${x}-${y}`} x={x} y={y} />))}
    {[792, 1081].map((x) => [377, 450, 522].map((y) => <Rebar key={`${x}-${y}`} x={x} y={y} />))}
    {[792, 1081].map((x) => [305, 594].map((y) => <Rebar key={`${x}-${y}`} x={x} y={y} c="#ff0" />))}
    <g stroke={G} strokeWidth="2">
      <DimH a={775} b={1098} y={270} />
      <DimH a={821} b={1052} y={353} />
      <DimH a={822} b={1052} y={546} />
      <DimH a={775} b={821} y={630} />
      <DimH a={822} b={1098} y={630} />
      <DimV x={757} a={288} b={611} />
      <DimV x={1116} a={288} b={611} />
      <DimV x={840} a={334} b={611} />
      <DimV x={1033} a={334} b={565} />
      <DimV x={803} a={565} b={611} />
    </g>
    <path d="M1099 288l48-48" stroke="#fff" />
    <g fill="#fff" fontFamily="Liberation Serif" fontSize="20" textAnchor="middle">
      {DIMS.map(([t, x, y]) => (
        <text key={t + x + y} x={x} y={y + 7}>{t}</text>
      ))}
    </g>
    <g fill="#fff" fontFamily="Noto Sans CJK SC" fontSize="19" fontWeight="300">
      <text x="1147" y="229">全部纵筋</text>
      <text x="1147" y="247">箍筋</text>
    </g>
    <g fill={G} fontFamily="Noto Sans CJK SC" fontSize="20" fontWeight="300" style={{ fontFeatureSettings: '"hwid"' }}>
      <text x="1230" y="229">4C18+12C16</text>
      <text x="1230" y="247">C8@100</text>
    </g>
  </svg>
);

/* ---------- bottom bars ---------- */
const StatusBar = styled.footer`
  height: 21px;
  flex: none;
  display: flex;
  gap: 2px;
  padding-top: 1px;
  background: #f0f0f0;
`;
const TaskBar = styled.footer`
  height: 40px;
  flex: none;
  display: flex;
  background: linear-gradient(to left, #000 69px, #000b0f 69px);
  color: #fff;
`;
const Start = styled.button`
  width: 48px;
  background: #000;
  display: flex;
  align-items: center;
  justify-content: center;
`;
const TaskSearch = styled.label`
  width: 344px;
  flex: none;
  display: flex;
  align-items: center;
  gap: 5px;
  padding: 0 14px 0 8px;
  background: #323232;
  input { flex: 1; min-width: 0; outline: 0; font-size: 14px; }
  input::placeholder { color: #9b9b9b; opacity: 1; }
`;
const Apps = styled.div`
  width: 543px;
  flex: none;
  display: flex;
  justify-content: space-between;
`;
const TaskApp = styled.button<{ $run?: boolean; $on?: boolean }>`
  width: 48px;
  display: flex;
  align-items: center;
  justify-content: center;
  background: ${(p) => (p.$on ? "#343d41" : "none")};
  ${(p) => p.$run && css`background-image: linear-gradient(#76b9ed, #76b9ed); background-size: ${p.$on ? 48 : 40}px 2px; background-position: bottom center; background-repeat: no-repeat;`}
`;
const Tray = styled.div`
  flex: 1;
  display: flex;
  align-items: center;
  justify-content: flex-end;
  gap: 9px;
`;
const Two = styled.div<{ $w: number }>`
  width: ${(p) => p.$w}px;
  line-height: 17px;
  text-align: center;
`;
const Notes = styled.button`
  position: relative;
  width: 48px;
  height: 40px;
  display: flex;
  align-items: center;
  padding: 0 0 4px 11px;
  border-right: 1px solid #555;
  margin: 0 4px 0 -9px;
`;
const Count = styled.span`
  position: absolute;
  left: 16px;
  top: 18px;
  width: 22px;
  height: 18px;
  line-height: 16px;
  border: 1px solid #777;
  border-radius: 9px;
  background: #333;
  font-weight: 700;
  text-align: center;
`;

const SogouS = ({ s }: { s: number }) => (
  <Ico w={s} h={s} box="0 0 28 28">
    <path d="M1 5L23 1l4 21-21 5z" fill="#ee4b16" stroke="#ee4b16" strokeWidth="2" strokeLinejoin="round" />
    <path d="M21 7C14 5 8 6 8 10c0 5 12 3 12 8 0 4-7 5-13 3" stroke="#fff" strokeWidth="3.600" />
  </Ico>
);

const MENU = ["文件(F)", "编辑(E)", "楼层(L)", "构件(N)", "绘图(D)", "修改(M)", "钢筋量(Q)", "视图(V)", "工具(T)", "云应用(Y)", "BIM应用(I)", "在线服务(S)", "帮助(H)", "版本号(B)"];

export default function App() {
  return (
    <Page>
      <Global />
      <TitleBar>
        <Logo />
        <TitleText>{"广联达BIM钢筋算量软件 GGJ2013 - [C:\\Users\\Administrator.PC-20141127NRHM\\Desktop\\白龙村-2016-08-25-13-27-07(2166版).GGJ12]"}</TitleText>
        <WinButtons>
          <button aria-label="最小化"><Ico w={11} h={11}><path d="M0 6.500h11" stroke="#777" /></Ico></button>
          <button aria-label="还原"><Ico w={11} h={11}><path d="M.5 2.500h8v8h-8zM2.500 2.500v-2h8v8h-2" stroke="#777" /></Ico></button>
          <button aria-label="关闭"><Ico w={11} h={11}><path d="M.5.5l10 10M10.500.5l-10 10" stroke="#777" /></Ico></button>
        </WinButtons>
      </TitleBar>

      <MenuRow>
        <Menus>
          {MENU.map((m) => <MenuItem key={m}>{m}</MenuItem>)}
          <MenuItem as="span"><Tool><NewChange />新建变更</Tool></MenuItem>
          <Caret />
          <MenuItem as="span"><Tool><Mascot />广小二</Tool></MenuItem>
        </Menus>
        <Bar $w={188}><Notice href="#tips">多边形编辑器的网格尺..</Notice></Bar>
        <Bar $gap={9} $pad={5}>
          <Tool><Avatar />13907298339</Tool>
          <Caret />
          <Tool>造价豆:0</Tool>
          <Bell />
          <Push><More /></Push>
        </Bar>
      </MenuRow>

      <ToolRow>
        <Bar $w={150} $gap={9}>
          <Tool aria-label="新建"><NewDoc /></Tool>
          <Tool aria-label="打开"><OpenDir /></Tool>
          <Caret />
          <Tool aria-label="保存"><Save /></Tool>
          <Sep />
          <Tool aria-label="撤销"><Undo /></Tool>
          <Caret />
          <Push><More /></Push>
        </Bar>
        <Bar $w={550} $pad={5}>
          <Tool><Paint />绘图</Tool>
          <Tool><Sigma />&nbsp;汇总计算</Tool>
          <Tool><CloudCheck />云检查</Tool>
          <Tool $off><Align />平齐板顶</Tool>
          <Tool $off><Binoc />查找图元</Tool>
          <Tool $off><Glasses />查看钢筋量</Tool>
          <Tool $off><Batch />批量选择</Tool>
          <Push><More /></Push>
        </Bar>
        <Bar $gap={7} $pad={1}>
          <Cluster $gap={3}>
            <Pick $w={62} $h={23} $edge="#777" $color="#858585">
              <Flat />
              <select aria-label="视图维度"><option>二维</option></select>
              <PickArrow><Caret color="#666" /></PickArrow>
            </Pick>
            <Tool $off><Cube />俯视</Tool>
          </Cluster>
          <Caret color="#666" />
          <Tool $off><Orbit />动态观察</Tool>
          <Tool $off><Part3d />局部三维</Tool>
          <Sep />
          <Tool $off><Full />全屏</Tool>
          <Tool $off><ZoomI />缩放</Tool>
          <Caret color="#666" />
          <Tool $off><Pan />平移</Tool>
          <Caret color="#666" />
          <Tool $off><Rotate />屏幕旋转<Caret color="#666" /></Tool>
          <Sep />
          <Tool $off><Floors />选择楼层</Tool>
          <Push><More /></Push>
        </Bar>
      </ToolRow>

      <Main>
        <Nav>
          <NavHead>
            <h2>模块导航栏</h2>
            <Pin />
            <NavClose aria-label="关闭导航栏"><CloseX /></NavClose>
          </NavHead>
          <NavButton>工程设置</NavButton>
          <NavButton>绘图输入</NavButton>
          <TreeTools>
            <Tool aria-label="全部展开"><Expand2 /></Tool>
            <Tool aria-label="全部折叠"><Collapse2 /></Tool>
          </TreeTools>
          <TreeBox>
            <Tree>
              {NODES.map((n, i) => (
                <Row key={i}>
                  {n.i ? <LeafLines last={n.last} /> : <FolderLines open={n.open} />}
                  <Leaf $pad={n.i ? 2 : 0} $bg={n.on ? "#d9d9d9" : undefined}>
                    {n.i || (n.open ? <Opened /> : <Closed />)}
                    <Song>{n.t}</Song>
                  </Leaf>
                </Row>
              ))}
            </Tree>
            <Scroll>
              <Ico w={9} h={6}><path d="M1 5l3.500-3.500L8 5" stroke="#505050" strokeWidth="1.600" /></Ico>
              <Thumb />
              <Ico w={9} h={6}><path d="M1 1l3.500 3.500L8 1" stroke="#505050" strokeWidth="1.600" /></Ico>
            </Scroll>
          </TreeBox>
          <NavButton>单构件输入</NavButton>
          <NavButton>报表预览</NavButton>
        </Nav>

        <Middle>
          <ToolRow>
            <Bar $gap={6} $pad={4}>
              <Tool><NewItem />新建<Caret /></Tool>
              <Tool><Cross />&nbsp;删除</Tool>
              <Tool><Copy />复制</Tool>
              <Tool><Rename />重命名</Tool>
              <Cluster $gap={3}>
                <Sep />
                <span>楼层</span>
                <Pick $w={64} $h={22}>
                  <select aria-label="楼层"><option>第5层</option></select>
                  <PickArrow><Caret /></PickArrow>
                </Pick>
              </Cluster>
              <Sep />
              <Tool><SortAZ />排序<Caret /></Tool>
              <Tool><Funnel />过滤<Caret /></Tool>
            </Bar>
          </ToolRow>
          <Columns>
            <Parts>
              <SearchRow>
                <input aria-label="搜索构件" placeholder="搜索构件…" />
                <button type="button" aria-label="搜索"><Lens /></button>
              </SearchRow>
              <PartTree>
                <Row>
                  <Ico w={19}>
                    <path d="M3 6l4 4 4-4" stroke="#404040" strokeWidth="1.500" />
                    <path d="M15 8.500h4" {...dots} />
                  </Ico>
                  <Leaf $gap={4}><Column />框柱</Leaf>
                </Row>
                {[1, 2, 3, 4].map((k) => (
                  <Row key={k}>
                    <Ico w={35}><path d={`M26.500 0v${k === 4 ? 8 : 16}M27 8.500h8`} {...dots} /></Ico>
                    <Leaf $pad={4} $gap={7} $bg={k === 4 ? "#316ac5" : undefined}>
                      <Gear /><Song>{`KZ-${k}`}</Song>
                    </Leaf>
                  </Row>
                ))}
              </PartTree>
            </Parts>
            <Props>
              <TabStrip $h={21}><Tab $on $w={62} $h={20}>属性编辑</Tab></TabStrip>
              <GridBox>
                <Grid>
                  <colgroup><col width="20" /><col width="191" /><col /></colgroup>
                  <thead>
                    <tr><th aria-label="序号" /><th scope="col">属性名称</th><th aria-label="属性值" /></tr>
                  </thead>
                  <tbody>
                    {ROWS.map(([n, name, v, c]) => (
                      <tr key={n}>
                        <Num scope="row" $on={n === 1}>{n}</Num>
                        <NameCell $c={c} $on={n === 1}>
                          <Name $plus={n >= 10}>
                            {n >= 10 && (
                              <PlusBox aria-label={`展开${name}`}>
                                <Ico w={7} h={7}><path d="M0 3.500h7M3.500 0v7" stroke="#000" /></Ico>
                              </PlusBox>
                            )}
                            <Song>{name}</Song>
                          </Name>
                        </NameCell>
                        <ValueCell $c={c === DIM ? DIM : "#000"} $on={n === 1}>
                          {n === 7 ? <Inline><Song>4</Song><Phi /><Song>18+</Song></Inline> : <Song>{v}</Song>}
                        </ValueCell>
                      </tr>
                    ))}
                  </tbody>
                </Grid>
              </GridBox>
            </Props>
          </Columns>
        </Middle>

        <Editor>
          <EditorTitle>截面编辑</EditorTitle>
          <TabStrip $h={21} $pad={2} $bg="#f0f0f0">
            <Tab $w={47} $h={19}>截面</Tab>
            <Tab $on $w={51} $h={21}>配筋</Tab>
          </TabStrip>
          <Pane>
            <EditRow $h={27}>
              <Grip />
              <Tool>布角筋</Tool>
              <Tool>布边筋</Tool>
              <Tool>特殊布筋</Tool>
              <Tool>对齐钢筋</Tool>
              <Tool>画箍筋</Tool>
              <Sep $tight />
              <Tool>修改纵筋</Tool>
              <Tool>修改箍筋</Tool>
              <Tool>编辑弯钩</Tool>
              <Tool>端头伸缩</Tool>
              <Tool $off>删除</Tool>
            </EditRow>
            <EditRow $h={30}>
              <Grip />
              <Field>
                <label htmlFor="rebar">钢筋信息</label>
                <Pick as="div" $w={133} $h={23} $edge="#777" $color="#7b7b7b">
                  <select id="rebar"><option>C8@100</option></select>
                  <PickArrow><Caret color="#555" /></PickArrow>
                </Pick>
              </Field>
            </EditRow>
            <Canvas><Section /></Canvas>
          </Pane>
          <EditorStatus>
            <Cell $w={148} $pad={8}><Song>(X: 132 Y: 598)</Song></Cell>
            <Cell />
          </EditorStatus>
        </Editor>
      </Main>

      <StatusBar>
        <Cell $w={148} />
        <Cell $w={78}><Song>层高:2.8m</Song></Cell>
        <Cell $w={98}><Song>底标高:14.75m</Song></Cell>
        <Cell $w={48}><Song>0</Song></Cell>
        <Cell>名称在当前层当前构件类型下不允许重名</Cell>
        <Cell $w={70}><Song>610.7 FPS</Song></Cell>
      </StatusBar>

      <TaskBar>
        <Start aria-label="开始">
          <Ico><path d="M0 2.300l7-1v6.200H0zM8 1.200L16 0v7.500H8zM0 8.500h7v6.200l-7-1zM8 8.500h8V16l-8-1.200z" fill="#fff" /></Ico>
        </Start>
        <TaskSearch>
          <Ico w={22} h={22}><circle cx="11" cy="11" r="9" stroke="#f2f2f2" strokeWidth="2.600" /></Ico>
          <input aria-label="搜索" placeholder="在这里输入你要搜索的内容" />
          <Ico w={12} h={16}><path d="M3.500.5h5v9h-5zM.5 7v5.500h11V7M6 12.500V15.500M3 15.500h6" stroke="#a8a8a8" /></Ico>
        </TaskSearch>
        <Apps>
          <TaskApp aria-label="任务视图"><Ico w={20} h={14}><path d="M4.500.5h11v13h-11zM3 2.500H.5v9H3M17 2.500h2.500v9H17" stroke="#fff" /></Ico></TaskApp>
          <TaskApp aria-label="风车">
            <Ico w={24} h={24}>
              {[0, 60, 120, 180, 240, 300].map((a) => (
                <path key={a} transform={`rotate(${a} 12 12)`} d="M12 12C7 10 6 4 11 1c5-1 7 2 6 5-1 2-4 3-5 6z" fill="#e8e8e8" stroke="#000b0f" />
              ))}
            </Ico>
          </TaskApp>
          <TaskApp aria-label="漩涡">
            <Ico w={20} h={20}>
              <path d="M19 1C16 3 13 .5 8 2 2 4 0 9 2 14c2 4 8 6 13 3 3-3 3-7 0-9-3-2-7 0-7 3s4 4 5 1" stroke="#eee" />
              <path d="M19 1.500C17 5 10 2.500 5.500 6 3 9 3.500 13 7 15c3 1.500 7 0 7.500-3 0-2-2-3-3.500-2" stroke="#eee" />
            </Ico>
          </TaskApp>
          <TaskApp aria-label="Edge">
            <Ico w={22} h={22}><path d="M1 10C2 4 6 1 11 1c6 0 10 4 10 9v3H8c0 4 7 6 11 3v4c-3 2-6 2-8 2-6-1-8-5-8-9 1-4 4-6 7-7-2 1-2 3-2 4h7c0-6-9-6-14 0z" fill="#0f79d8" /></Ico>
          </TaskApp>
          <TaskApp aria-label="应用商店">
            <Ico w={24} h={24}>
              <path d="M8 7V4.500C8 0 16 0 16 4.500V7" stroke="#ddd" strokeWidth="1.300" />
              <path d="M1 6h22v15.500q0 1-1 1H2q-1 0-1-1z" fill="#fff" />
              <path d="M7 9h5v5H7z" fill="#f25022" /><path d="M13 9h5v5h-5z" fill="#7fba00" />
              <path d="M7 15h5v5H7z" fill="#00a4ef" /><path d="M13 15h5v5h-5z" fill="#ffb900" />
            </Ico>
          </TaskApp>
          <TaskApp aria-label="文件资源管理器">
            <Ico w={22} h={20}>
              <path d="M0 1h8l1 2h13v15H0z" fill="#fbe28e" /><path d="M0 1h8l1 2H0z" fill="#e9b93c" />
              <path d="M4 18v-7h14v7h-3v-4H7v4z" fill="#37a5dc" />
            </Ico>
          </TaskApp>
          <TaskApp aria-label="Internet Explorer">
            <Ico w={24} h={24}>
              <path d="M12 4c5.500 0 9 3.500 9 9.500H9c0 3 4 4 6 1.500h6c-1 4.500-4.500 7-9 7-5.500 0-9-4-9-9s3.500-9 9-9zm-3 6.500h6c-1-3-5-3-6 0z" fill="#4aa6f2" fillRule="evenodd" />
              <path d="M3 22C-2 17 12 2 20 2c4 0 2 5 1 7 1-3 1-5-1-5C14 3 2 16 5 20c1 2 4 1 6 0-3 3-6 4-8 2z" fill="#f5c73a" />
            </Ico>
          </TaskApp>
          <TaskApp $run aria-label="广联达">
            <Ico w={24} h={24}>
              <path d="M24 1c-2 4-6 3-9 4-4 1-7 4-6 8 1 3 5 5 8 3 1-2 1-3-1-4 5-1 8 4 5 8 0 2-1 3-2 4-1-1-2-1-4-1C7 23 1 19 1 12 1 6 5 2 10 1c5-1 9 2 14 0z" fill="#17a4ef" />
              <path d="M21 14c1 3 0 6-3 7M4 7C2 11 2 15 4 18" stroke="#2472c8" strokeWidth="1.500" />
            </Ico>
          </TaskApp>
          <TaskApp $run aria-label="360浏览器">
            <Ico w={24} h={24}>
              <circle cx="12" cy="12" r="10" fill="#52bb2c" stroke="#dff3d8" strokeWidth="1.500" />
              <path d="M17 15c-2 5-11 3-11-3s9-8 11-1H8" stroke="#fff" strokeWidth="2.500" />
              <path d="M2 20C6 10 14 3 21 2" stroke="#2b8c18" />
            </Ico>
          </TaskApp>
          <TaskApp $run $on aria-label="GGJ2013">
            <Ico w={24} h={24}>
              <rect width="24" height="24" rx="4" fill="#0c94f5" />
              <path d="M12 19V8c0-3 3-4 5-2M5 13h14M5 10.500V13c0 3 5 4 7 1.500 2 2.500 7 1.500 7-1.500v-1.500" stroke="#fff" strokeWidth="1.800" />
            </Ico>
          </TaskApp>
          <TaskApp $run aria-label="记事">
            <Ico w={24} h={24}>
              <rect width="24" height="24" rx="2" fill="#f39a1d" />
              <rect x="2" y="2" width="20" height="20" stroke="#fbd26c" strokeWidth="1.500" />
              <path d="M4 7l10-2 3 14-10 2z" fill="#fff" />
              <path d="M6 10l7-1.500M7 13l7-1.500M7.500 16l5-1" stroke="#888" />
              <path d="M22 1L12 13" stroke="#7c3a14" strokeWidth="2.400" />
            </Ico>
          </TaskApp>
        </Apps>
        <Tray>
          <Two $w={52}>19%<br />CPU使用</Two>
          <span />
          <Ico w={13} h={8}><path d="M1 7l5.500-5.500L12 7" stroke="#fff" strokeWidth="1.300" /></Ico>
          <Ico w={17} h={12}><path d="M5.500 3.500h10v7h-10zM16 5.500h1v3h-1" stroke="#fff" /><path d="M7 5h7v4H7z" fill="#fff" /><path d="M1.500 0v2.500h3V0M3 3v6.500h2" stroke="#fff" /></Ico>
          <Ico w={13} h={13}><path d="M1 12C1 6 6 1 12 1M4 12c0-5 4-8 8-8M7 12c0-3 2-5 5-5" stroke="#ddd" /><circle cx="11" cy="11" r="1.500" fill="#fff" /></Ico>
          <Ico w={16} h={14}><path d="M.5 5h3l3.500-4v12L3.500 9h-3zM9 5c1 1 1 3 0 4M11 3.500c2 2 2 5 0 7M13 2c3 3 3 7 0 10" stroke="#fff" /></Ico>
          <Ico w={23} h={14}><path d="M.5 1.500h22v11H.5z" stroke="#fff" /><path d="M3 4.500h17M3 7h17" stroke="#fff" strokeDasharray="2 1" /><path d="M5 10h13" stroke="#fff" /></Ico>
          <Two $w={19} /><SogouS s={16} />
          <Two $w={76}>13:14<br />2017/11/15</Two>
          <Notes aria-label="通知">
            <Ico w={16} h={15}><path d="M0 0h16v12H8l-3 3v-3H0z" fill="#fff" /><path d="M3 3.500h10M3 6h10M3 8.500h10" stroke="#000" /></Ico>
            <Count>20</Count>
          </Notes>
        </Tray>
      </TaskBar>

      <Ball aria-label="加速球">66</Ball>
      <Ime>
        <ImeBadge><SogouS s={28} /></ImeBadge>
        <Ico w={14} h={15}><path d="M1 4h12v5H1zM7 0v15" stroke="#1b75cc" strokeWidth="2" /></Ico>
        <Ico w={14}><circle cx="3.500" cy="4.500" r="2" stroke="#1b75cc" strokeWidth="1.300" /><path d="M10 9c2 1 2 3 0 4.500" stroke="#1b75cc" strokeWidth="2" /></Ico>
        <Ico w={14}><rect x="4.500" y="0" width="5" height="10" rx="2.500" fill="#1b75cc" /><path d="M2 6c0 7 10 7 10 0M7 12v3M3.500 15.300h7" stroke="#1b75cc" strokeWidth="1.400" /></Ico>
        <Ico w={16} h={12}><rect x=".7" y=".7" width="14.600" height="10.600" stroke="#1b75cc" strokeWidth="1.400" /><path d="M3 3.500h10M3 6h10" stroke="#1b75cc" strokeWidth="1.300" strokeDasharray="1.500 1" /><path d="M4 9h8" stroke="#1b75cc" strokeWidth="1.300" /></Ico>
        <Ico w={17}><circle cx="6" cy="4" r="3" fill="#b4bfd1" /><path d="M0 14c0-7 12-7 12 0z" fill="#b4bfd1" /><rect x="7" y="8.500" width="9.500" height="7" rx="1" fill="#fff" stroke="#9fadc4" /><text x="8" y="14.500" fontSize="7" fontFamily="Liberation Sans" fill="#8496b3">19</text></Ico>
        <Ico w={15}><path d="M4 1c2 2 5 2 7 0l4 3-2 3.500-1.500-1V15h-8V6.500L2 7.500 0 4z" fill="#1b75cc" /></Ico>
        <Ico w={15}><path d="M1.500 14.500L8 8" stroke="#1b75cc" strokeWidth="3" /><path d="M14.500 4.500l-3 2-2.500-2 2-3.500C7 .5 5.500 4 7 7c2.500 3 7.500 2 7.500-2.500z" fill="#1b75cc" /></Ico>
      </Ime>
    </Page>
  );
}
